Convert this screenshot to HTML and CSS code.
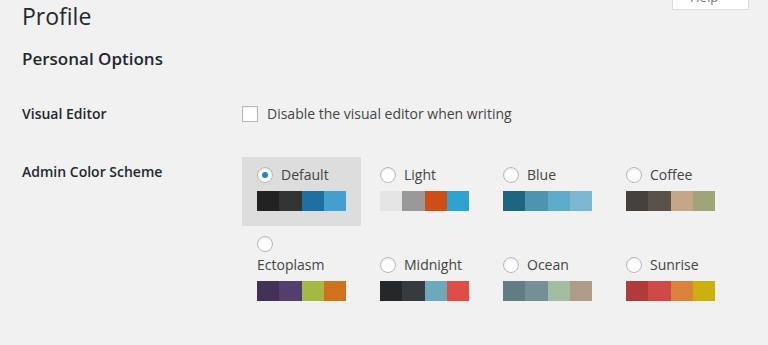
FILE: index.html
```html
<!DOCTYPE html>
<html lang="en">
<head>
    <meta charset="UTF-8">
    <title>Profile</title>
    <link rel="stylesheet" href="styles.css">
</head>
<body>
    <div class="wrap">
        <div class="top">
            <h1>Profile</h1>
            <div class="help-tab"><span>Help</span></div>
        </div>

        <h2>Personal Options</h2>

        <div class="form-row">
            <div class="row-label">Visual Editor</div>
            <div class="row-field">
                <label class="check"><span class="checkbox"></span>Disable the visual editor when writing</label>
            </div>
        </div>

        <div class="form-row scheme-row">
            <div class="row-label">Admin Color Scheme</div>
            <div class="schemes">
                <div class="scheme selected">
                    <div class="scheme-name"><span class="radio checked"></span>Default</div>
                    <div class="palette"><i class="c1"></i><i class="c2"></i><i class="c3"></i><i class="c4"></i></div>
                </div>
                <div class="scheme">
                    <div class="scheme-name"><span class="radio"></span>Light</div>
                    <div class="palette"><i class="l1"></i><i class="l2"></i><i class="l3"></i><i class="l4"></i></div>
                </div>
                <div class="scheme">
                    <div class="scheme-name"><span class="radio"></span>Blue</div>
                    <div class="palette"><i class="b1"></i><i class="b2"></i><i class="b3"></i><i class="b4"></i></div>
                </div>
                <div class="scheme">
                    <div class="scheme-name"><span class="radio"></span>Coffee</div>
                    <div class="palette"><i class="co1"></i><i class="co2"></i><i class="co3"></i><i class="co4"></i></div>
                </div>
                <div class="scheme">
                    <div class="scheme-name"><span class="radio"></span>Ectoplasm</div>
                    <div class="palette"><i class="e1"></i><i class="e2"></i><i class="e3"></i><i class="e4"></i></div>
                </div>
                <div class="scheme">
                    <div class="scheme-name"><span class="radio"></span>Midnight</div>
                    <div class="palette"><i class="m1"></i><i class="m2"></i><i class="m3"></i><i class="m4"></i></div>
                </div>
                <div class="scheme">
                    <div class="scheme-name"><span class="radio"></span>Ocean</div>
                    <div class="palette"><i class="o1"></i><i class="o2"></i><i class="o3"></i><i class="o4"></i></div>
                </div>
                <div class="scheme">
                    <div class="scheme-name"><span class="radio"></span>Sunrise</div>
                    <div class="palette"><i class="s1"></i><i class="s2"></i><i class="s3"></i><i class="s4"></i></div>
                </div>
            </div>
        </div>
    </div>
</body>
</html>
```

FILE: styles.css
```css
body {
    margin: 0;
    background: #f1f1f1;
    color: #444;
    font-family: "Open Sans", "Noto Sans", sans-serif;
    font-size: 14px;
    line-height: 20px;
}

.wrap {
    padding: 0 19px 0 22px;
}

/* HEADER */
.top {
    display: flex;
    justify-content: space-between;
    align-items: flex-start;
}

h1 {
    margin: 2px 0 0;
    font-size: 23px;
    line-height: 29px;
    font-weight: 400;
    color: #23282d;
}

.help-tab {
    width: 75px;
    height: 9px;
    overflow: hidden;
    background: #fff;
    border: 1px solid #ddd;
    border-top: none;
}
.help-tab span {
    display: block;
    margin-top: -13px;
    padding-left: 17px;
    font-size: 13px;
    line-height: 20px;
    color: #72777c;
}

h2 {
    margin: 16px 0 0;
    font-size: 17px;
    line-height: 24px;
    font-weight: 600;
    color: #23282d;
}

/* FORM */
.form-row {
    display: flex;
    margin-top: 33px;
}

.row-label {
    width: 220px;
    flex-shrink: 0;
    font-weight: 600;
    color: #23282d;
}
.scheme-row .row-label {
    padding-top: 5px;
}

.check {
    display: flex;
    align-items: center;
    gap: 9px;
}

.checkbox {
    width: 14px;
    height: 14px;
    background: #fff;
    border: 1px solid #b4b9be;
    box-shadow: inset 0 1px 2px rgba(0,0,0,.07);
}

/* COLOR SCHEMES */
.schemes {
    display: grid;
    grid-template-columns: repeat(4, 119px);
    column-gap: 4px;
    row-gap: 2px;
    align-items: end;
}

.scheme {
    padding: 8px 15px 15px;
}
.scheme.selected {
    background: #ddd;
}

.scheme-name {
    display: flex;
    flex-wrap: wrap;
    align-items: center;
    column-gap: 8px;
    row-gap: 3px;
    margin-bottom: 6px;
}

.radio {
    position: relative;
    width: 14px;
    height: 14px;
    border-radius: 50%;
    background: #fff;
    border: 1px solid #b4b9be;
    box-shadow: inset 0 1px 2px rgba(0,0,0,.1);
}
.radio.checked::after {
    content: "";
    position: absolute;
    left: 4px;
    top: 4px;
    width: 6px;
    height: 6px;
    border-radius: 50%;
    background: #1e8cbe;
}

.palette {
    display: flex;
    height: 20px;
}
.palette i {
    flex: 1;
}

.c1 {background: #222;}
.c2 {background: #333;}
.c3 {background: #1f70a2;}
.c4 {background: #43a0ce;}

.l1 {background: #e5e5e5;}
.l2 {background: #999;}
.l3 {background: #d04e16;}
.l4 {background: #2ea2cf;}

.b1 {background: #1e6483;}
.b2 {background: #4d94b1;}
.b3 {background: #5eaccc;}
.b4 {background: #7db6d0;}

.co1 {background: #46413c;}
.co2 {background: #59524b;}
.co3 {background: #c5a687;}
.co4 {background: #9ea677;}

.e1 {background: #413256;}
.e2 {background: #523f6d;}
.e3 {background: #a4b844;}
.e4 {background: #d0711b;}

.m1 {background: #25282b;}
.m2 {background: #363b3f;}
.m3 {background: #6ea8bb;}
.m4 {background: #de4e47;}

.o1 {background: #627c83;}
.o2 {background: #758f96;}
.o3 {background: #a1bca1;}
.o4 {background: #ad9c88;}

.s1 {background: #b03c39;}
.s2 {background: #cd4a47;}
.s3 {background: #db823d;}
.s4 {background: #cbb00f;}
```
